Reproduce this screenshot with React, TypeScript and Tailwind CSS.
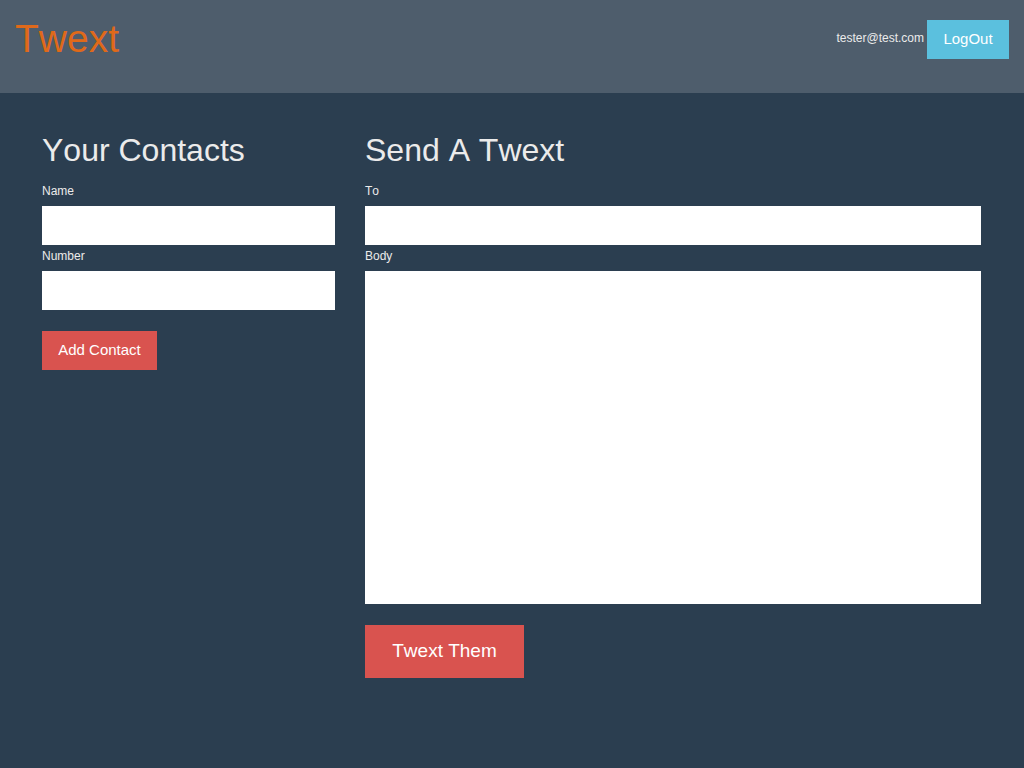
import React from "react";

export default function App() {
  const font = { fontFamily: '"Liberation Sans", Arial, sans-serif' };
  return (
    <div className="min-h-screen bg-[#2b3e50] text-[#ebebeb] [font-kerning:none]" style={font}>
      <header className="h-[93px] bg-[#4e5d6c] flex justify-between px-[15px]">
        <div className="mt-[19px] text-[39px] leading-[39px] text-[#df691a]">Twext</div>
        <div className="flex items-start mt-[20px] gap-[3px]">
          <span className="text-[12px] leading-[36px] text-[#ebebeb]">tester@test.com</span>
          <button className="w-[82px] h-[39px] pb-[3px] bg-[#5bc0de] text-white text-[15px] leading-[17px] text-center">
            LogOut
          </button>
        </div>
      </header>
      <main className="w-[970px] mx-auto px-[15px] pt-[39px] flex gap-[30px]">
        <section className="w-[293px] shrink-0">
          <h1 className="text-[32px] leading-[36px]">Your Contacts</h1>
          <label className="block mt-[15px] text-[12px] leading-[16px]">Name</label>
          <input className="block mt-[7px] w-full h-[39px] bg-white border-0 outline-none" />
          <label className="block mt-[3px] text-[12px] leading-[16px]">Number</label>
          <input className="block mt-[7px] w-full h-[39px] bg-white border-0 outline-none" />
          <button className="block mt-[21px] w-[115px] h-[39px] pb-[3px] bg-[#d9534f] text-white text-[15px] leading-[17px] text-center">
            Add Contact
          </button>
        </section>
        <section className="w-[616px] shrink-0">
          <h1 className="text-[32px] leading-[36px]">Send A Twext</h1>
          <label className="block mt-[15px] text-[12px] leading-[16px]">To</label>
          <input className="block mt-[7px] w-full h-[39px] bg-white border-0 outline-none" />
          <label className="block mt-[3px] text-[12px] leading-[16px]">Body</label>
          <textarea className="block mt-[7px] w-full h-[333px] bg-white border-0 outline-none resize-none" />
          <button className="block mt-[21px] w-[159px] h-[53px] pb-[2px] bg-[#d9534f] text-white text-[19px] leading-[22px] text-center">
            Twext Them
          </button>
        </section>
      </main>
    </div>
  );
}
